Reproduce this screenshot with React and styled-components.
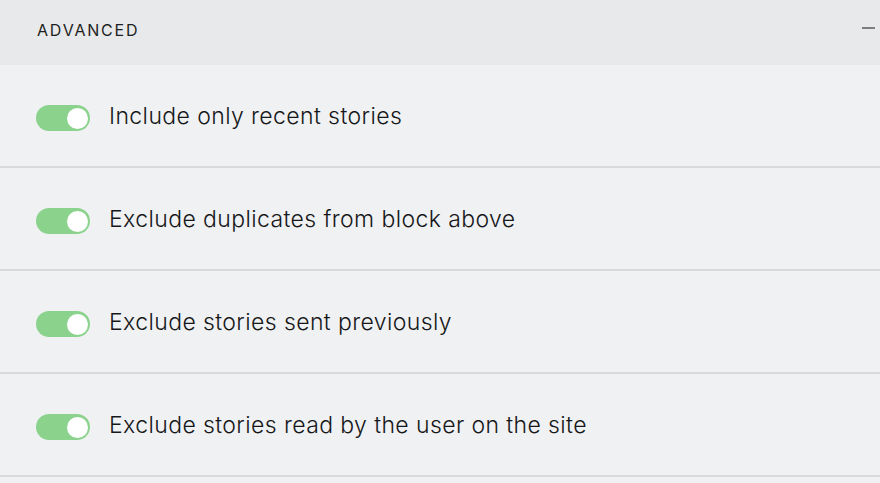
import React from 'react'
import styled, { createGlobalStyle } from 'styled-components'

const GlobalStyle = createGlobalStyle`
  html, body {
    margin: 0;
    padding: 0;
    background: #f0f1f3;
  }
  body {
    font-family: Inter, "Noto Sans", sans-serif;
    color: #161719;
  }
`

const options = [
  'Include only recent stories',
  'Exclude duplicates from block above',
  'Exclude stories sent previously',
  'Exclude stories read by the user on the site',
]

export default function App() {
  return (
    <>
      <GlobalStyle />
      <Panel>
        <Header>
          <Title>ADVANCED</Title>
          <Collapse aria-label="collapse" />
        </Header>
        <List>
          {options.map((label) => (
            <Row key={label}>
              <Toggle $on>
                <Knob />
              </Toggle>
              <Label>{label}</Label>
            </Row>
          ))}
        </List>
      </Panel>
    </>
  )
}

const Panel = styled.div`
  width: 880px;
  height: 483px;
  overflow: hidden;
  background: #f0f1f3;
`
const Header = styled.div`
  height: 65px;
  background: #e8e9eb;
  display: flex;
  align-items: center;
  justify-content: space-between;
  padding: 0 5px 5px 37px;
  box-sizing: border-box;
`
const Title = styled.h2`
  margin: 0;
  font-size: 16px;
  font-weight: 400;
  letter-spacing: 1.8px;
  color: #1e1f21;
`
const Collapse = styled.span`
  width: 13px;
  height: 2px;
  margin-bottom: 4px;
  background: #7d7e80;
`
const List = styled.ul`
  list-style: none;
  margin: 0;
  padding: 0;
`
const Row = styled.li`
  height: 101px;
  border-bottom: 2px solid #d8d9db;
  display: flex;
  align-items: center;
  padding: 0 0 0 36px;
  gap: 19px;
`
const Toggle = styled.span`
  width: 54px;
  height: 26px;
  margin-top: 5px;
  border-radius: 13px;
  background: ${(p) => (p.$on ? '#8bd38d' : '#c7c8ca')};
  display: flex;
  align-items: center;
  justify-content: ${(p) => (p.$on ? 'flex-end' : 'flex-start')};
  padding: 0 2px;
  box-sizing: border-box;
  flex-shrink: 0;
`
const Knob = styled.span`
  width: 21px;
  height: 21px;
  border-radius: 50%;
  background: #fff;
`
const Label = styled.span`
  font-size: 23px;
  font-weight: 350;
  letter-spacing: 0.4px;
`
